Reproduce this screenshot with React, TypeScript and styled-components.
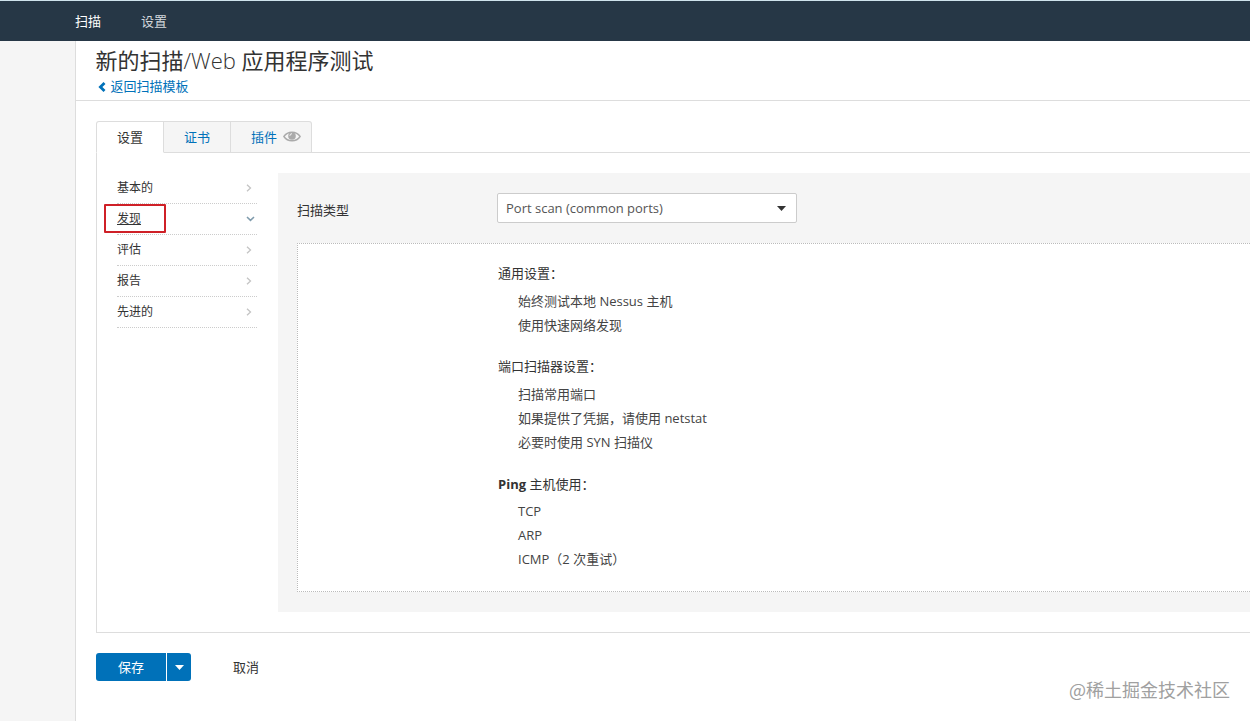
import React from "react";
import styled, { createGlobalStyle, css } from "styled-components";

const Global = createGlobalStyle`
  * { box-sizing: border-box; }
  html, body { margin: 0; padding: 0; overflow: hidden; }
  body {
    background: #fff;
    color: #333;
    font: 13px/24px "Open Sans", "Noto Sans CJK SC", sans-serif;
  }
  a { color: inherit; text-decoration: none; }
  ul, h1, p { margin: 0; padding: 0; font-weight: 400; list-style: none; }
`;

const Page = styled.div`
  width: 1250px;
  height: 721px;
  display: flex;
  flex-direction: column;
  overflow: hidden;
  position: relative;
`;

const TopBar = styled.nav`
  height: 41px;
  flex: none;
  background: #263746;
  border-top: 1px solid #cfe3ec;
  padding-left: 75px;
  display: flex;
  align-items: center;
  gap: 40px;
`;

const NavLink = styled.a<{ $active?: boolean }>`
  color: ${(p) => (p.$active ? "#fff" : "#d3d8dc")};
  line-height: 20px;
`;

const Body = styled.div`
  flex: 1;
  min-height: 0;
  display: flex;
`;

const Sidebar = styled.aside`
  width: 76px;
  flex: none;
  background: #f5f5f5;
  border-right: 1px solid #ddd;
`;

const Main = styled.main`
  flex: 1;
  min-width: 0;
`;

const Header = styled.header`
  height: 60px;
  border-bottom: 1px solid #ddd;
  padding: 4px 0 0 19.5px;
`;

const Title = styled.h1`
  font-size: 22px;
  line-height: 30px;
  white-space: nowrap;
`;

const Light = styled.span`
  font-weight: 300;
`;

const BackLink = styled.a`
  display: flex;
  align-items: center;
  gap: 5px;
  padding-left: 2px;
  line-height: 23px;
  color: #0071b9;
`;

const Content = styled.section`
  padding: 20px 0 0 20px;
`;

const Tabs = styled.div`
  display: flex;
  height: 32px;
  position: relative;
  z-index: 1;
  margin-bottom: -1px;
`;

const Tab = styled.a<{ $width: number; $active?: boolean }>`
  width: ${(p) => p.$width}px;
  height: 32px;
  display: flex;
  align-items: center;
  padding: 0 0 1px 20px;
  gap: 6px;
  border: 1px solid #ddd;
  border-left-width: 0;
  background: #f5f5f5;
  color: #0071b9;
  ${(p) =>
    p.$active &&
    css`
      background: #fff;
      color: #333;
      border-left-width: 1px;
      border-bottom-color: #fff;
    `}
  &:first-child { border-top-left-radius: 3px; }
  &:last-child { border-top-right-radius: 3px; }
`;

const Panel = styled.div`
  height: 481px;
  border: 1px solid #ddd;
  border-right: 0;
  padding: 20px 0 20px 20px;
  display: flex;
  gap: 21px;
`;

const Menu = styled.ul`
  width: 140px;
  flex: none;
`;

const MenuItem = styled.li<{ $active?: boolean }>`
  height: 31px;
  display: flex;
  align-items: center;
  justify-content: space-between;
  position: relative;
  padding-right: ${(p) => (p.$active ? 2 : 5)}px;
  border-bottom: 1px dotted #ccc;
  font-size: 12px;
  span {
    text-decoration: ${(p) => (p.$active ? "underline" : "none")};
    text-underline-offset: 1px;
  }
`;

const Marker = styled.div`
  position: absolute;
  left: -13px;
  top: 0;
  width: 62px;
  height: 29px;
  border: 2px solid #cf2027;
  border-radius: 1px;
`;

const Settings = styled.div`
  flex: 1;
  background: #f5f5f5;
  padding: 20px 0 20px 19px;
`;

const Field = styled.div`
  display: flex;
  height: 50px;
  align-items: flex-start;
`;

const FieldLabel = styled.label`
  width: 200px;
  line-height: 34px;
`;

const Select = styled.div`
  width: 300px;
  height: 30px;
  display: flex;
  align-items: center;
  justify-content: space-between;
  background: #fff;
  border: 1px solid #ccc;
  border-radius: 2px;
  padding: 0 10px 0 8px;
  color: #555;
  svg { color: #333; }
`;

const Summary = styled.div`
  height: 349px;
  background: #fff;
  border: 1px dotted #bbb;
  border-right: 0;
  padding: 17px 0 0 200px;
`;

const Group = styled.div`
  margin-bottom: 17px;
  &:last-child {
    margin-top: 18px;
  }
  &:last-child p {
    margin-bottom: 3px;
  }
`;

const GroupTitle = styled.p`
  margin-bottom: 4px;
`;

const GroupList = styled.ul`
  padding-left: 20px;
  color: #444;
`;

const Actions = styled.div`
  display: flex;
  align-items: center;
  margin-top: 20px;
  height: 28px;
`;

const SplitButton = styled.div`
  display: flex;
  gap: 1px;
  height: 28px;
`;

const Save = styled.button`
  width: 70px;
  border: 0;
  padding: 0 0 1px;
  background: #0071b9;
  color: #fff;
  font: inherit;
  border-radius: 3px 0 0 3px;
`;

const SaveMore = styled.button`
  width: 24px;
  border: 0;
  padding: 0;
  display: flex;
  align-items: center;
  justify-content: center;
  background: #0071b9;
  color: #fff;
  border-radius: 0 3px 3px 0;
`;

const Cancel = styled.a`
  margin-left: 42px;
  padding-bottom: 1px;
`;

const Watermark = styled.div`
  position: absolute;
  right: 20px;
  bottom: 19px;
  font-size: 18px;
  line-height: 26px;
  color: #a0a0a0;
  font-family: "Noto Sans CJK SC", sans-serif;
  white-space: nowrap;
`;

const Caret = () => (
  <svg width="9" height="5" viewBox="0 0 9 5" fill="currentColor">
    <path d="M0 0H9L4.5 5Z" />
  </svg>
);

const ChevronRight = () => (
  <svg width="6" height="8" viewBox="0 0 6 8" fill="none" stroke="#c4c4c4" strokeWidth="1.3">
    <path d="M1 .8 4.5 4 1 7.2" />
  </svg>
);

const ChevronDown = () => (
  <svg width="9" height="6" viewBox="0 0 9 6" fill="none" stroke="#7f9bac" strokeWidth="1.5">
    <path d="M1 1 4.5 4.4 8 1" />
  </svg>
);

const BackArrow = () => (
  <svg width="8" height="10" viewBox="0 0 8 10" fill="none" stroke="currentColor" strokeWidth="2.8">
    <path d="M6.5 1 2.4 5 6.5 9" />
  </svg>
);

const Eye = () => (
  <svg width="18" height="11" viewBox="0 0 18 11" fill="none">
    <path d="M.9 5.5C4.6-.2 13.4-.2 17.1 5.5 13.4 11.2 4.6 11.2.9 5.5Z" stroke="#aaa" strokeWidth="1.4" />
    <circle cx="9" cy="5" r="3.8" fill="#aaa" />
    <path d="M6.9 4.8A2.1 2.1 0 0 1 9 2.7" stroke="#f5f5f5" strokeWidth="1" />
  </svg>
);

const menu = ["基本的", "发现", "评估", "报告", "先进的"];

const groups: { title: React.ReactNode; items: string[] }[] = [
  { title: "通用设置：", items: ["始终测试本地 Nessus 主机", "使用快速网络发现"] },
  {
    title: "端口扫描器设置：",
    items: ["扫描常用端口", "如果提供了凭据，请使用 netstat", "必要时使用 SYN 扫描仪"],
  },
  { title: <><b>Ping</b> 主机使用：</>, items: ["TCP", "ARP", "ICMP（2 次重试）"] },
];

export default function App() {
  return (
    <Page>
      <Global />
      <TopBar>
        <NavLink $active>扫描</NavLink>
        <NavLink>设置</NavLink>
      </TopBar>
      <Body>
        <Sidebar />
        <Main>
          <Header>
            <Title>
              新的扫描<Light>/Web</Light> 应用程序测试
            </Title>
            <BackLink>
              <BackArrow />
              返回扫描模板
            </BackLink>
          </Header>
          <Content>
            <Tabs>
              <Tab $width={68} $active>设置</Tab>
              <Tab $width={67}>证书</Tab>
              <Tab $width={81}>
                插件
                <Eye />
              </Tab>
            </Tabs>
            <Panel>
              <Menu>
                {menu.map((label, i) => (
                  <MenuItem key={label} $active={i === 1}>
                    <span>{label}</span>
                    {i === 1 ? <ChevronDown /> : <ChevronRight />}
                    {i === 1 && <Marker />}
                  </MenuItem>
                ))}
              </Menu>
              <Settings>
                <Field>
                  <FieldLabel>扫描类型</FieldLabel>
                  <Select>
                    Port scan (common ports)
                    <Caret />
                  </Select>
                </Field>
                <Summary>
                  {groups.map((g, i) => (
                    <Group key={i}>
                      <GroupTitle>{g.title}</GroupTitle>
                      <GroupList>
                        {g.items.map((t) => (
                          <li key={t}>{t}</li>
                        ))}
                      </GroupList>
                    </Group>
                  ))}
                </Summary>
              </Settings>
            </Panel>
            <Actions>
              <SplitButton>
                <Save>保存</Save>
                <SaveMore>
                  <Caret />
                </SaveMore>
              </SplitButton>
              <Cancel>取消</Cancel>
            </Actions>
          </Content>
        </Main>
      </Body>
      <Watermark>@稀土掘金技术社区</Watermark>
    </Page>
  );
}
